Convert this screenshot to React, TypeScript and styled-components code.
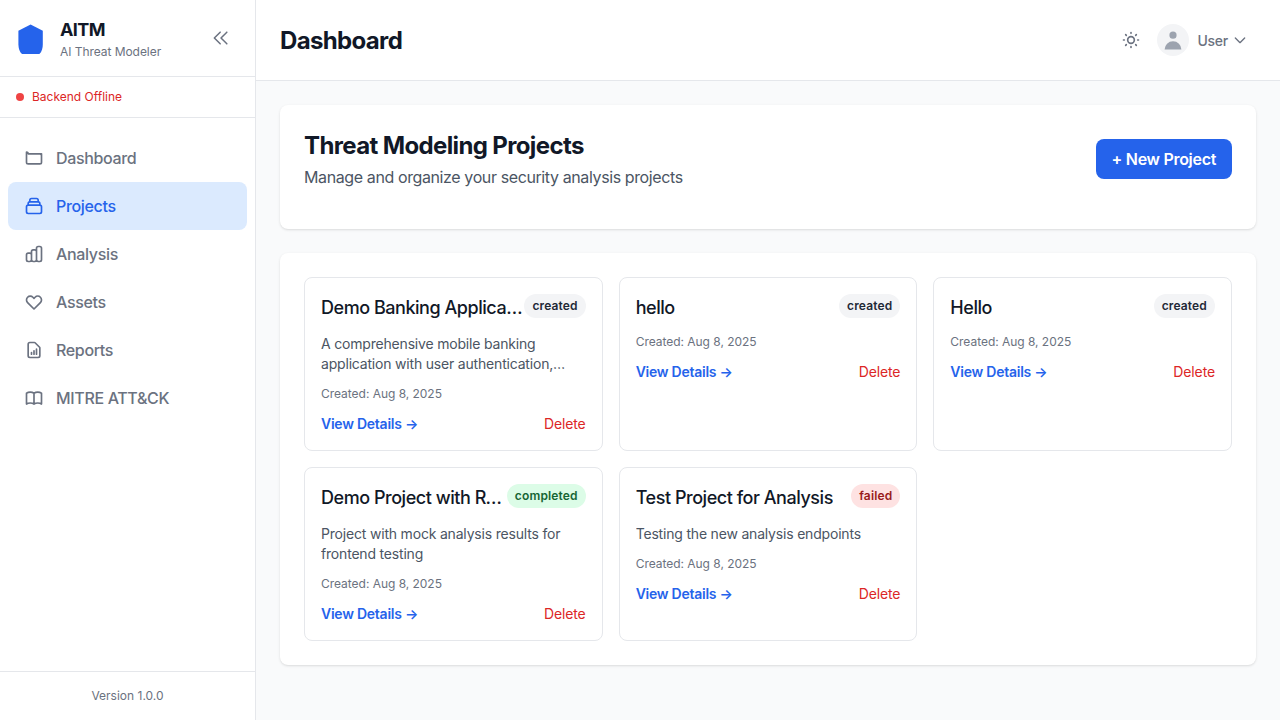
import React from 'react';
import styled, { createGlobalStyle } from 'styled-components';

const Global = createGlobalStyle`
  *, *::before, *::after { box-sizing: border-box; }
  body { margin: 0; font-family: Inter, "Liberation Sans", sans-serif; color: #111827; background: #f9fafb; font-size: 16px; line-height: 24px; }
  h1, h2, h3, p { margin: 0; }
  button { font: inherit; border: 0; background: none; padding: 0; letter-spacing: inherit; }
`;

const Shell = styled.div`display: flex; height: 100vh; overflow: hidden;`;
const Sidebar = styled.aside`
  width: 256px; flex: none; display: flex; flex-direction: column;
  background: #fff; border-right: 1px solid #e5e7eb;
`;
const Brand = styled.div`
  height: 77px; display: flex; align-items: center; padding: 0 16px;
  border-bottom: 1px solid #e5e7eb;
`;
const BrandText = styled.div`margin-left: 12px; flex: 1;`;
const BrandName = styled.h1`font-size: 18px; line-height: 28px; font-weight: 700; letter-spacing: -0.6px;`;
const BrandSub = styled.p`font-size: 12px; line-height: 16px; color: #6b7280; letter-spacing: -0.05px;`;
const Collapse = styled.button`display: flex; margin-right: 8.5px; color: #6b7280;`;
const Status = styled.div`
  height: 41px; display: flex; align-items: center; gap: 8px; padding: 0 16px;
  border-bottom: 1px solid #e5e7eb; font-size: 12px; line-height: 16px; color: #dc2626;
`;
const Dot = styled.span`width: 8px; height: 8px; border-radius: 50%; background: #ef4444;`;
const Nav = styled.nav`flex: 1; padding: 16px 8px;`;
const NavItem = styled.a<{ $active?: boolean }>`
  display: flex; align-items: center; gap: 12px; height: 48px; padding: 0 16px;
  border-radius: 8px; font-weight: 550; letter-spacing: -0.34px;
  color: ${p => (p.$active ? '#2563eb' : '#6b7280')};
  background: ${p => (p.$active ? '#dbeafe' : 'transparent')};
`;
const Version = styled.div`
  height: 49px; border-top: 1px solid #e5e7eb; display: flex; align-items: center;
  justify-content: center; font-size: 12px; line-height: 16px; color: #6b7280;
`;
const Column = styled.div`flex: 1; min-width: 0; display: flex; flex-direction: column;`;
const TopBar = styled.header`
  height: 81px; flex: none; display: flex; align-items: center; padding: 0 32px 0 24px;
  background: #fff; border-bottom: 1px solid #e5e7eb;
`;
const PageTitle = styled.h1`flex: 1; padding-top: 2px; font-size: 24px; line-height: 32px; font-weight: 700; letter-spacing: -0.65px;`;
const ThemeButton = styled.button`display: flex; color: #6b7280; margin-right: 16px;`;
const UserMenu = styled.button`display: flex; align-items: center; color: #6b7280; font-size: 14px; font-weight: 550; line-height: 20px;`;
const Avatar = styled.span`
  width: 32px; height: 32px; margin-right: 8px; border-radius: 50%; background: #f3f4f6; color: #9ca3af;
  display: flex; align-items: center; justify-content: center;
`;
const UserName = styled.span`margin-right: 4px; padding-top: 1px; letter-spacing: -0.25px;`;
const Main = styled.main`flex: 1; padding: 24px; display: flex; flex-direction: column; gap: 24px;`;
const Panel = styled.section`
  background: #fff; border-radius: 8px; padding: 24px;
  box-shadow: 0 1px 3px rgba(0,0,0,.1), 0 1px 2px -1px rgba(0,0,0,.1);
`;
const Intro = styled(Panel)`height: 124px; display: flex; justify-content: space-between; align-items: flex-start;`;
const IntroTitle = styled.h2`padding-top: 1px; font-size: 24px; line-height: 32px; font-weight: 700; letter-spacing: -0.63px;`;
const IntroSub = styled.p`margin-top: 3px; color: #4b5563; letter-spacing: -0.39px;`;
const Primary = styled.button`
  height: 40px; margin-top: 10px; padding: 0 16px; border-radius: 8px; background: #2563eb; color: #fff;
  font-weight: 600; letter-spacing: -0.3px; white-space: nowrap;
`;
const Grid = styled.div`display: grid; grid-template-columns: repeat(3, minmax(0, 1fr)); gap: 16px;`;
const Card = styled.article`height: 174px; border: 1px solid #e5e7eb; border-radius: 8px; padding: 16px;`;
const CardHead = styled.div`display: flex; justify-content: space-between; align-items: flex-start; margin-bottom: 12px;`;
const CardTitle = styled.h3`
  font-size: 18px; line-height: 28px; font-weight: 500; letter-spacing: -0.46px;
  overflow: hidden; text-overflow: ellipsis; white-space: nowrap;
`;
const tones = {
  created: ['#f3f4f6', '#1f2937'],
  completed: ['#dcfce7', '#166534'],
  failed: ['#fee2e2', '#991b1b'],
};
type Tone = keyof typeof tones;
const Badge = styled.span<{ $tone: Tone }>`
  flex: none; padding: 4px 8px; border-radius: 12px; font-size: 12px; line-height: 16px; font-weight: 600; letter-spacing: 0.14px;
  background: ${p => tones[p.$tone][0]}; color: ${p => tones[p.$tone][1]};
`;
const Description = styled.p`
  font-size: 14px; line-height: 20px; color: #4b5563; margin-bottom: 12px; letter-spacing: -0.19px;
  display: -webkit-box; -webkit-line-clamp: 2; -webkit-box-orient: vertical; overflow: hidden;
`;
const Created = styled.p`font-size: 12px; line-height: 16px; color: #6b7280; margin-bottom: 12px; letter-spacing: -0.03px;`;
const Actions = styled.div`display: flex; justify-content: space-between; font-size: 14px; line-height: 20px; letter-spacing: -0.13px;`;
const Details = styled.a`color: #2563eb; font-weight: 600; letter-spacing: -0.25px;`;
const Delete = styled.button`color: #dc2626;`;

const Icon = ({ d, size = 20, w = 2 }: { d: string; size?: number; w?: number }) => (
  <svg width={size} height={size} viewBox="0 0 24 24" fill="none" stroke="currentColor" strokeWidth={w} strokeLinecap="round" strokeLinejoin="round">
    <path d={d} />
  </svg>
);

const nav = [
  { label: 'Dashboard', d: 'M3 7v10a2 2 0 002 2h14a2 2 0 002-2V9a2 2 0 00-2-2H5a2 2 0 00-2-2zM19 7h2v2' },
  { label: 'Projects', active: true, d: 'M19 11H5m14 0a2 2 0 012 2v6a2 2 0 01-2 2H5a2 2 0 01-2-2v-6a2 2 0 012-2m14 0V9a2 2 0 00-2-2M5 11V9a2 2 0 012-2m0 0V5a2 2 0 012-2h6a2 2 0 012 2v2M7 7h10' },
  { label: 'Analysis', d: 'M9 19v-6a2 2 0 00-2-2H5a2 2 0 00-2 2v6a2 2 0 002 2h2a2 2 0 002-2zm0 0V9a2 2 0 012-2h2a2 2 0 012 2v10m-6 0a2 2 0 002 2h2a2 2 0 002-2m0 0V5a2 2 0 012-2h2a2 2 0 012 2v14a2 2 0 01-2 2h-2a2 2 0 01-2-2z' },
  { label: 'Assets', d: 'M4.318 6.318a4.5 4.5 0 000 6.364L12 20.364l7.682-7.682a4.5 4.5 0 00-6.364-6.364L12 7.636l-1.318-1.318a4.5 4.5 0 00-6.364 0z' },
  { label: 'Reports', d: 'M9 17v-2m3 2v-4m3 4v-6m2 10H7a2 2 0 01-2-2V5a2 2 0 012-2h5.586a1 1 0 01.707.293l5.414 5.414a1 1 0 01.293.707V19a2 2 0 01-2 2z' },
  { label: 'MITRE ATT&CK', d: 'M12 6.253v13m0-13C10.832 5.477 9.246 5 7.5 5S4.168 5.477 3 6.253v13C4.168 18.477 5.754 18 7.5 18s3.332.477 4.5 1.253m0-13C13.168 5.477 14.754 5 16.5 5c1.747 0 3.332.477 4.5 1.253v13C19.832 18.477 18.247 18 16.5 18c-1.746 0-3.332.477-4.5 1.253' },
];

const projects: { title: string; status: Tone; text?: string }[] = [
  { title: 'Demo Banking Application', status: 'created', text: 'A comprehensive mobile banking application with user authentication, payments and account management' },
  { title: 'hello', status: 'created' },
  { title: 'Hello', status: 'created' },
  { title: 'Demo Project with Results', status: 'completed', text: 'Project with mock analysis results for frontend testing' },
  { title: 'Test Project for Analysis', status: 'failed', text: 'Testing the new analysis endpoints' },
];

export default function App() {
  return (
    <Shell>
      <Global />
      <Sidebar>
        <Brand>
          <svg width="32" height="32" viewBox="0 0 32 32" fill="#2563eb">
            <path d="M14.6 2.6L26.8 8.8V22c0 4-1 8-3.4 10H6C3.5 30 2.4 26 2.4 22V8.8z" />
          </svg>
          <BrandText>
            <BrandName>AITM</BrandName>
            <BrandSub>AI Threat Modeler</BrandSub>
          </BrandText>
          <Collapse aria-label="Collapse"><Icon w={1.8} d="M11 19l-7-7 7-7m8 14l-7-7 7-7" /></Collapse>
        </Brand>
        <Status><Dot />Backend Offline</Status>
        <Nav>
          {nav.map(n => (
            <NavItem key={n.label} $active={n.active}><Icon d={n.d} />{n.label}</NavItem>
          ))}
        </Nav>
        <Version>Version 1.0.0</Version>
      </Sidebar>
      <Column>
        <TopBar>
          <PageTitle>Dashboard</PageTitle>
          <ThemeButton aria-label="Theme"><Icon d="M12 3v1m0 16v1m9-9h-1M4 12H3m15.364 6.364l-.707-.707M6.343 6.343l-.707-.707m12.728 0l-.707.707M6.343 17.657l-.707.707M16 12a4 4 0 11-8 0 4 4 0 018 0z" /></ThemeButton>
          <UserMenu>
            <Avatar>
              <svg width="24" height="24" viewBox="0 0 20 20" fill="currentColor"><path d="M10 9a3 3 0 100-6 3 3 0 000 6zm-7 9a7 7 0 1114 0H3z" /></svg>
            </Avatar>
            <UserName>User</UserName>
            <Icon size={16} d="M19 9l-7 7-7-7" />
          </UserMenu>
        </TopBar>
        <Main>
          <Intro>
            <div>
              <IntroTitle>Threat Modeling Projects</IntroTitle>
              <IntroSub>Manage and organize your security analysis projects</IntroSub>
            </div>
            <Primary>+ New Project</Primary>
          </Intro>
          <Panel>
            <Grid>
              {projects.map(p => (
                <Card key={p.title}>
                  <CardHead><CardTitle>{p.title}</CardTitle><Badge $tone={p.status}>{p.status}</Badge></CardHead>
                  {p.text && <Description>{p.text}</Description>}
                  <Created>Created: Aug 8, 2025</Created>
                  <Actions><Details>View Details →</Details><Delete>Delete</Delete></Actions>
                </Card>
              ))}
            </Grid>
          </Panel>
        </Main>
      </Column>
    </Shell>
  );
}
